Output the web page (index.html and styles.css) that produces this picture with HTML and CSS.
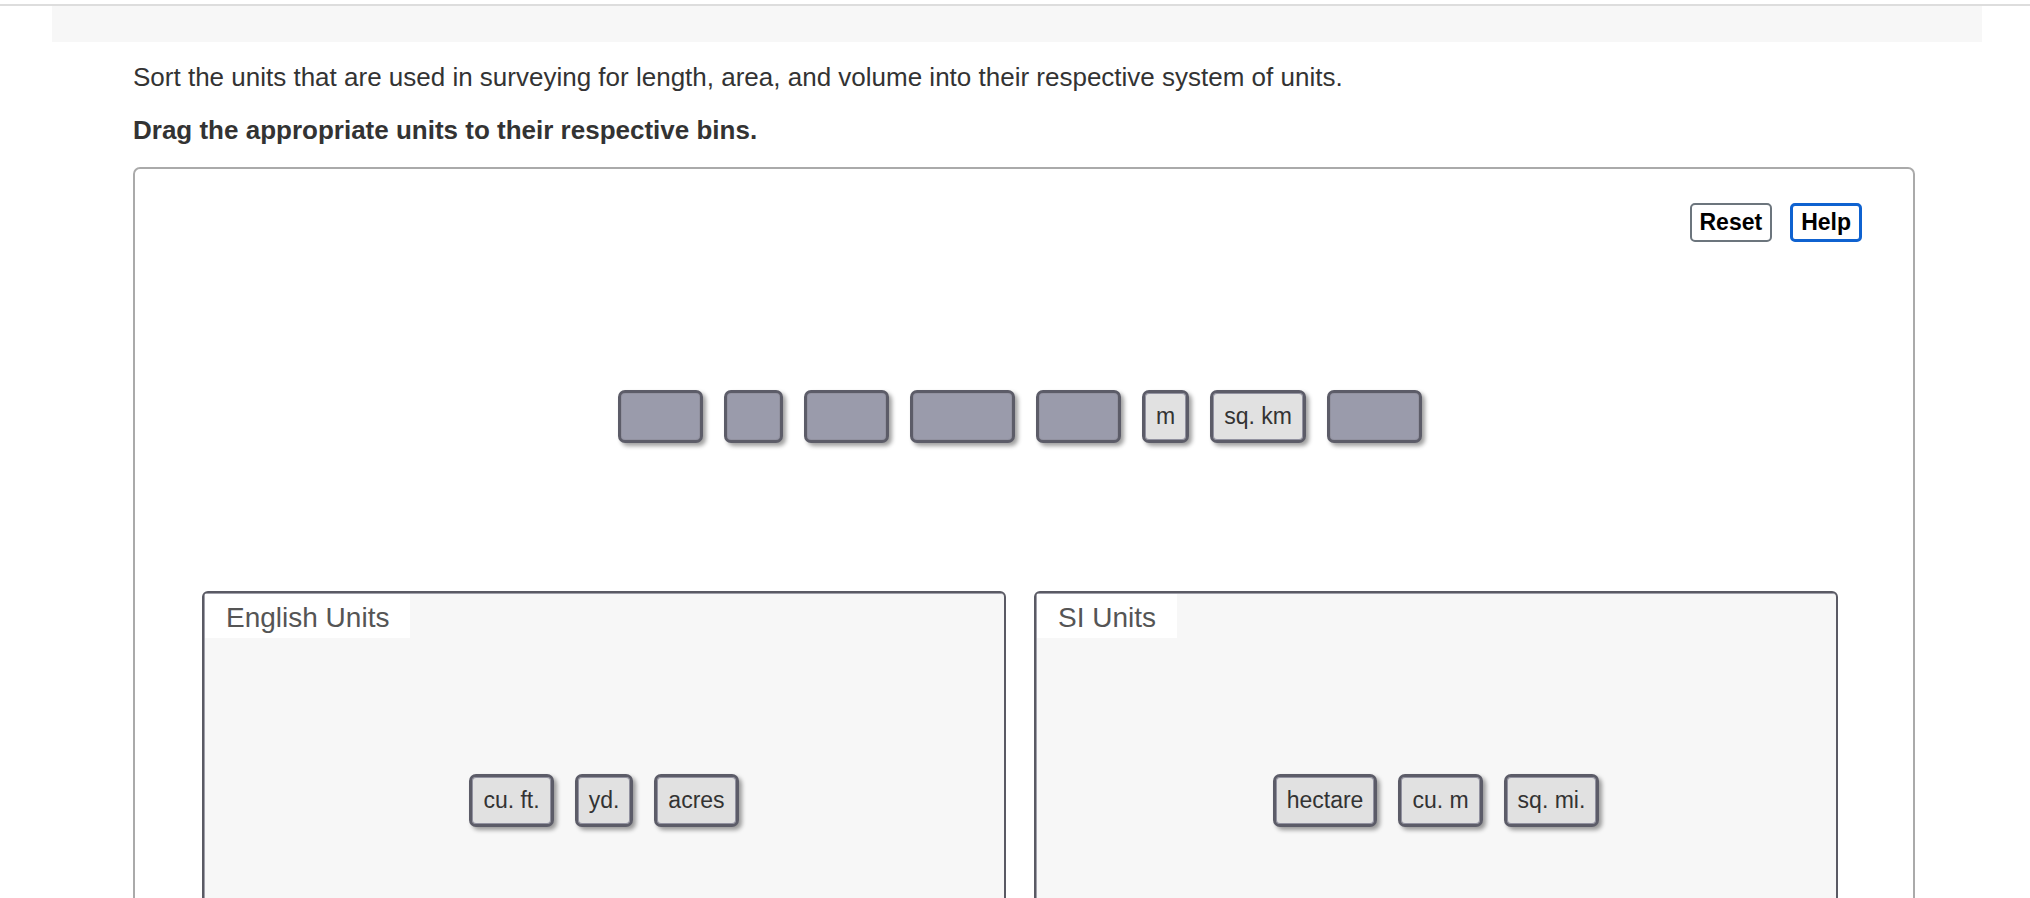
FILE: index.html
```html
<!DOCTYPE html>
<html lang="en">
<head>
<meta charset="utf-8">
<title>Sort units</title>
<link rel="stylesheet" href="styles.css">
</head>
<body>
<div class="topline"></div>
<div class="header-bar"></div>
<main class="content">
  <p class="prompt">Sort the units that are used in surveying for length, area, and volume into their respective system of units.</p>
  <p class="instruction">Drag the appropriate units to their respective bins.</p>
  <section class="workspace">
    <div class="toolbar">
      <button class="btn btn-reset" type="button">Reset</button>
      <button class="btn btn-help" type="button">Help</button>
    </div>
    <div class="pool">
      <div class="tile tile-blank w85"></div>
      <div class="tile tile-blank w59"></div>
      <div class="tile tile-blank w85"></div>
      <div class="tile tile-blank w105"></div>
      <div class="tile tile-blank w85"></div>
      <div class="tile">m</div>
      <div class="tile">sq. km</div>
      <div class="tile tile-blank w95"></div>
    </div>
    <div class="bins">
      <div class="bin">
        <div class="bin-label">English Units</div>
        <div class="bin-items">
          <div class="tile">cu. ft.</div>
          <div class="tile">yd.</div>
          <div class="tile">acres</div>
        </div>
      </div>
      <div class="bin">
        <div class="bin-label">SI Units</div>
        <div class="bin-items">
          <div class="tile">hectare</div>
          <div class="tile">cu. m</div>
          <div class="tile">sq. mi.</div>
        </div>
      </div>
    </div>
  </section>
</main>
</body>
</html>
```

FILE: styles.css
```css
html, body {
  margin: 0;
  padding: 0;
  background: #ffffff;
  font-family: "Liberation Sans", Arial, Helvetica, sans-serif;
  color: #333333;
}

.topline {
  height: 2px;
  margin-top: 4px;
  background: #dddddd;
}

.header-bar {
  height: 36px;
  margin: 0 48px 0 52px;
  background: #f7f7f7;
}

.content {
  padding: 0 115px 0 133px;
}

.prompt {
  margin: 21px 0 0;
  font-size: 26px;
  line-height: 28px;
  color: #333333;
}

.instruction {
  margin: 25px 0 0;
  font-size: 26px;
  line-height: 28px;
  font-weight: bold;
  color: #333333;
}

.workspace {
  margin-top: 23px;
  border: 2px solid #aaaaaa;
  border-radius: 7px;
  height: 900px;
  box-sizing: border-box;
}

.toolbar {
  display: flex;
  justify-content: flex-end;
  gap: 18px;
  padding: 34px 51px 0 0;
}

.btn {
  font-family: "Liberation Sans", Arial, sans-serif;
  font-weight: bold;
  font-size: 23px;
  color: #000000;
  background: #ffffff;
  height: 39px;
  border-radius: 5px;
  box-sizing: border-box;
  line-height: 1;
}

.btn-reset {
  border: 2px solid #6c757d;
  padding: 0 8px;
}

.btn-help {
  border: 3px solid #0f62d0;
  padding: 0 8px;
}

.pool {
  display: flex;
  justify-content: center;
  gap: 21px;
  margin-top: 148px;
  padding-right: 8px;
}

.tile {
  box-sizing: border-box;
  height: 53px;
  padding: 0 11px;
  border: 3px solid #5c5c68;
  border-radius: 7px;
  background: #e1e1e1;
  box-shadow: inset 0 0 0 1px #9292a0, 3px 3px 4px rgba(0, 0, 0, 0.38);
  font-size: 23px;
  line-height: 47px;
  color: #333333;
  white-space: nowrap;
}

.tile-blank {
  background: #9a9bab;
  padding: 0;
}

.w59 { width: 59px; }
.w85 { width: 85px; }
.w95 { width: 95px; }
.w105 { width: 105px; }

.bins {
  display: flex;
  gap: 28px;
  margin-top: 148px;
  padding: 0 75px 0 67px;
}

.bin {
  flex: 1;
  height: 480px;
  background: #f7f7f7;
  border: 2px solid #5a5a64;
  border-radius: 6px;
  box-shadow: inset 1px 1px 0 #a0a0aa;
}

.bin-label {
  display: inline-block;
  margin: 1px 0 0 1px;
  padding: 2px 21px 0 21px;
  height: 42px;
  line-height: 44px;
  background: #ffffff;
  font-size: 28px;
  color: #555555;
}

.bin-items {
  display: flex;
  justify-content: center;
  gap: 21px;
  margin-top: 136px;
}
```
